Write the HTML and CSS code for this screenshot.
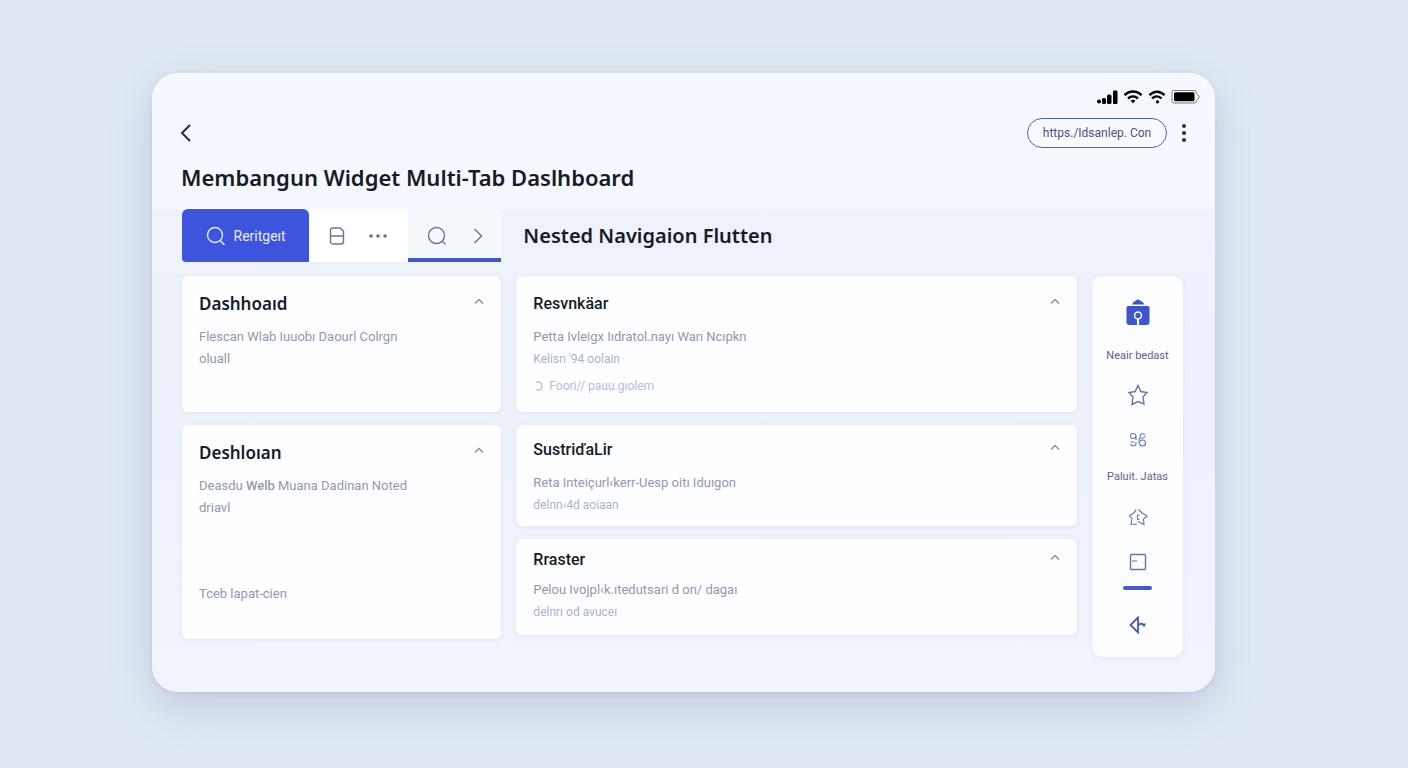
FILE: index.html
```html
<!DOCTYPE html>
<html lang="id">
<head>
    <meta charset="UTF-8">
    <meta name="viewport" content="width=device-width, initial-scale=1.0">
    <title>Membangun Widget Multi-Tab</title>
    <link rel="stylesheet" href="styles.css">
</head>
<body>

    <div class="window">
        <header class="header">
            <!-- Status icons -->
            <div class="status">
                <svg width="22" height="16" viewBox="0 0 22 16">
                    <circle cx="3" cy="12.5" r="2"/>
                    <rect x="6" y="9" width="4" height="6" rx="1.6"/>
                    <rect x="11" y="5.500" width="4.500" height="9.500" rx="1.6"/>
                    <rect x="17" y="1.500" width="4.500" height="13.500" rx="1.2"/>
                </svg>
                <svg width="20" height="16" viewBox="0 0 20 16">
                    <path class="wave" d="M1.500 6.200C6.500 1.200 13.500 1.200 18.500 6.200"/>
                    <path class="wave" d="M5 9.500C8 6.800 12 6.800 15 9.500"/>
                    <path d="M7.600 11.600Q10 9.800 12.400 11.600L10 14.500Z"/>
                </svg>
                <svg width="18" height="16" viewBox="0 0 18 16">
                    <path class="wave" d="M1.500 6.200C6 1.600 12 1.600 16.500 6.200"/>
                    <path class="wave" d="M4 9.500C7 6.500 11 6.800 13.500 9.500"/>
                    <circle cx="9.500" cy="12.800" r="1.600"/>
                </svg>
                <svg width="29" height="16" viewBox="0 0 29 16">
                    <path class="shell" d="M3 1.500H23Q25.500 1.500 25.500 4.500L28 7V9L25.500 11.500Q25.500 14 23 14H3Q1 14 1 12V3.500Q1 1.500 3 1.500Z"/>
                    <rect x="3" y="3.200" width="20.500" height="9" rx="1.5"/>
                </svg>
            </div>

            <div class="toolbar">
                <button class="icon-button" aria-label="Kembali">
                    <svg width="12" height="20" viewBox="0 0 12 20"><path class="back" d="M10 2L2 10L10 18"/></svg>
                </button>
                <div class="address">
                    <input class="url" type="text" aria-label="URL" value="https./Idsanlep. Con">
                    <button class="icon-button" aria-label="Menu">
                        <svg class="dots" width="6" height="20" viewBox="0 0 6 20">
                            <circle cx="3" cy="3" r="2"/><circle cx="3" cy="10" r="2"/><circle cx="3" cy="17" r="2"/>
                        </svg>
                    </button>
                </div>
            </div>

            <h1>Membangun Widget Multi-Tab Daslhboard</h1>
        </header>

        <main class="content">
            <nav class="tabs">
                <button class="tab tab-primary">
                    <svg class="line" width="20" height="20" viewBox="0 0 20 20"><circle cx="9" cy="9" r="7.500"/><path d="M14.200 14.500L18.500 19"/></svg>
                    Reritgeıt
                </button>
                <button class="tab tab-plain" aria-label="Halaman">
                    <svg class="line" width="16" height="20" viewBox="0 0 16 20"><path d="M4 2H11L14.500 5V15.500Q14.500 18 12 18H4Q1.500 18 1.500 15.500V4.500Q1.500 2 4 2ZM1.500 10H14.500"/></svg>
                    <svg class="more" width="20" height="6" viewBox="0 0 20 6"><circle cx="3" cy="3" r="1.800"/><circle cx="10" cy="3" r="1.800"/><circle cx="17" cy="3" r="1.800"/></svg>
                </button>
                <button class="tab tab-active" aria-label="Cari">
                    <svg class="line" width="20" height="20" viewBox="0 0 20 20"><circle cx="9.500" cy="9.500" r="8"/><path d="M15.200 15.200L18.500 18.500"/></svg>
                    <svg class="line" width="10" height="18" viewBox="0 0 10 18"><path d="M1.500 2L8.500 9L1.500 16"/></svg>
                </button>
            </nav>
            <h2>Nested Navigaion Flutten</h2>

            <!-- Left column -->
            <div class="column">
                <section class="card">
                    <div class="card-head">
                        <h3>Dashhoaıd</h3>
                        <button class="icon-button" aria-label="Tutup"><svg class="caret" width="10" height="7" viewBox="0 0 10 7"><path d="M1 5.500L5 1.500L9 5.500"/></svg></button>
                    </div>
                    <p>Flescan Wlab Iuuobı Daourl Colrgn<br>oluall</p>
                </section>
                <section class="card card-tall">
                    <div class="card-head">
                        <h3>Deshloıan</h3>
                        <button class="icon-button" aria-label="Tutup"><svg class="caret" width="10" height="7" viewBox="0 0 10 7"><path d="M1 5.500L5 1.500L9 5.500"/></svg></button>
                    </div>
                    <p>Deasdu <b>Welb</b> Muana Dadinan Noted<br>driavl</p>
                    <p class="card-foot">Tceb lapat-cien</p>
                </section>
            </div>

            <!-- Middle column -->
            <div class="column column-main">
                <section class="card">
                    <div class="card-head">
                        <h3>Resvnkäar</h3>
                        <button class="icon-button" aria-label="Tutup"><svg class="caret" width="10" height="7" viewBox="0 0 10 7"><path d="M1 5.500L5 1.500L9 5.500"/></svg></button>
                    </div>
                    <p>Petta Ivleigx Iıdratol.nayı Wan Ncıpkn<br><span class="soft">Kelisn '94 oolain</span></p>
                    <p class="note">
                        <svg width="8" height="10" viewBox="0 0 8 10"><path d="M1 1H4Q7 1 7 5T4 9H1"/></svg>
                        Foori// pauu.gıolem
                    </p>
                </section>
                <section class="card card-medium">
                    <div class="card-head">
                        <h3>SustriďaLir</h3>
                        <button class="icon-button" aria-label="Tutup"><svg class="caret" width="10" height="7" viewBox="0 0 10 7"><path d="M1 5.500L5 1.500L9 5.500"/></svg></button>
                    </div>
                    <p>Reta Inteiçurl‹kerr-Uesp oitı Iduıgon<br><span class="soft">delnn‹4d aoiaan</span></p>
                </section>
                <section class="card card-small">
                    <div class="card-head">
                        <h3>Rraster</h3>
                        <button class="icon-button" aria-label="Tutup"><svg class="caret" width="10" height="7" viewBox="0 0 10 7"><path d="M1 5.500L5 1.500L9 5.500"/></svg></button>
                    </div>
                    <p>Pelou Ivojpl‹k.ıtedutsari d on/ dagaı<br><span class="soft">delnrı od avuceı</span></p>
                </section>
            </div>

            <!-- Icon rail -->
            <aside class="rail">
                <button class="rail-button" aria-label="Kunci">
                    <svg class="solid" width="24" height="28" viewBox="0 0 24 28">
                        <path d="M6 6.500Q7 3.500 10 2.500Q12 .5 14 2.500Q17 3.500 18.500 6.500Z"/>
                        <path d="M2 8H22Q23.500 8 23.500 9.500V24Q23.500 27 20.500 27H13V21.500A4.200 4.200 0 1 0 11 21.500V27H3.500Q.5 27 .5 24V9.500Q.5 8 2 8Z"/>
                        <circle cx="12" cy="17.500" r="2.700"/>
                    </svg>
                </button>
                <span class="rail-label rail-label-first">Neair bedast</span>
                <button class="rail-button" aria-label="Favorit">
                    <svg class="line" width="20" height="22" viewBox="0 0 20 22"><path d="M10 1.500L12.800 7.500L19 8.500L15 13L16 20L10 17.500L4 20.500L5 13L1 8.500L7.200 7.500Z"/></svg>
                </button>
                <button class="rail-button" aria-label="Tautan">
                    <svg class="line thin" width="18" height="16" viewBox="0 0 18 16"><path d="M7 5Q7 1.500 4.200 1.500Q1.500 1.500 1.500 4Q1.500 6.500 4 6.500Q7 6.500 7 4V8M1.500 10H5M7 10V11.500Q7 14 4.200 14Q2 14 1.500 12M16 2.500Q12 .5 11.200 3.500Q12 6 9.500 8.500M9.500 11Q11 7.800 14 8Q16.500 8 16.500 11Q16.500 14 13.500 14Q10.500 14 10.500 11M12 6Q14 7 16.500 4"/></svg>
                </button>
                <span class="rail-label">Paluit. Jatas</span>
                <button class="rail-button" aria-label="Riwayat">
                    <svg class="line thin" width="20" height="18" viewBox="0 0 20 18"><path d="M8 1.500Q7 5 1.500 7.500L4 11L3 16.500L9 16M10.500 1.500L14 5L19 8L15.500 11L16 16.500L10 13.500M11.500 7L9.500 7.500V11.500L11.500 11"/></svg>
                </button>
                <button class="rail-button" aria-label="Tab">
                    <svg class="line" width="18" height="18" viewBox="0 0 18 18"><rect x="1.500" y="1.500" width="15" height="15" rx="1"/><path class="thin" d="M3 8H8"/></svg>
                </button>
                <span class="rail-mark"></span>
                <button class="rail-button" aria-label="Bagikan">
                    <svg class="line strong" width="18" height="18" viewBox="0 0 18 18"><path d="M9 1.500V16.500L1.500 9ZM9 9.500Q12 6.500 14 8.500L15.500 10.500M13.500 8.500L16.500 8.500"/></svg>
                </button>
            </aside>
        </main>
    </div>

</body>
</html>
```
FILE: styles.css
```css
/* Page */
* {
    box-sizing: border-box;
}

body {
    margin: 0;
    min-height: 100vh;
    padding: 73px 193px 76px 152px;
    background: #e0e9f2;
    font-family: Roboto, "Liberation Sans", sans-serif;
    color: #151c28;
}

h1, h2, h3, p {
    margin: 0;
}

button {
    border: none;
    padding: 0;
    background: none;
    font-family: inherit;
    cursor: pointer;
}

svg {
    display: block;
    flex: none;
}

/* Window */
.window {
    border-radius: 26px;
    background: linear-gradient(#eff2f9, #edf1fb 60%, #f1f4fc);
    box-shadow: 0 14px 40px rgba(120, 140, 180, 0.32), 0 1px 5px rgba(120, 140, 180, 0.16);
    overflow: hidden;
}

.header {
    padding: 15px 15px 18px 29px;
    background: #f5f8fe;
}

.status {
    display: flex;
    justify-content: flex-end;
    align-items: center;
    gap: 5px;
    height: 18px;
}

.wave {
    fill: none;
    stroke: #000;
    stroke-width: 2.4;
}

.shell {
    fill: #fff;
    stroke: #777;
}

.toolbar {
    display: flex;
    justify-content: space-between;
    align-items: center;
    height: 32px;
    margin: 11px 13px 14px 0;
}

.icon-button {
    display: block;
}

.toolbar > .icon-button {
    margin-left: -1px;
}

.back {
    fill: none;
    stroke: #17304f;
    stroke-width: 2;
}

.address {
    display: flex;
    align-items: center;
    gap: 14px;
}

.dots {
    fill: #1f2f63;
}

.url {
    width: 140px;
    height: 30px;
    padding: 0 11px;
    border: 1px solid #5065b4;
    border-radius: 15px;
    background: #f8faff;
    font-family: Roboto, sans-serif;
    font-size: 12px;
    text-align: center;
    color: #47547c;
}

h1 {
    font-family: "Noto Sans", sans-serif;
    font-size: 22px;
    line-height: 28px;
    font-weight: 600;
}

h2 {
    align-self: center;
    padding-left: 7px;
    font-family: "Noto Sans", sans-serif;
    font-size: 20px;
    line-height: 28px;
    font-weight: 600;
}

/* Content grid */
.content {
    display: grid;
    grid-template-columns: 319fr 560fr 91px;
    align-items: start;
    gap: 14px 15px;
    padding: 0 32px 35px 30px;
}

.content h2 {
    grid-column: 2 / 4;
}

.tabs {
    display: flex;
    height: 53px;
}

.tab {
    display: flex;
    align-items: center;
    justify-content: center;
    color: #69788f;
}

.tab-primary {
    flex: 127;
    gap: 8px;
    border-radius: 6px 6px 0 4px;
    background: #3d55dc;
    font-size: 14px;
    color: #e6ebff;
}

.tab-plain {
    flex: 99;
    gap: 23px;
    background: #fff;
}

.tab-active {
    flex: 93;
    gap: 26px;
    border-top: 4px solid transparent;
    border-bottom: 4px solid #3f58c4;
    background: #f5f8fc;
}

.line {
    fill: none;
    stroke: currentColor;
    stroke-width: 1.4;
}

.more {
    fill: #60718d;
}

/* Cards */
.column {
    display: flex;
    flex-direction: column;
    gap: 13px;
}

.card {
    min-height: 136px;
    padding: 18px 17px 16px;
    border-radius: 6px;
    background: #fdfeff;
    box-shadow: 0 1px 4px rgba(120, 140, 190, 0.14);
}

.card-tall {
    display: flex;
    flex-direction: column;
    min-height: 214px;
    padding-bottom: 34px;
}

.card-medium {
    min-height: 101px;
    padding-top: 15px;
    padding-bottom: 10px;
}

.card-small {
    min-height: 96px;
    padding-top: 11px;
    padding-bottom: 12px;
}

.card-head {
    display: flex;
    justify-content: space-between;
    align-items: flex-start;
    height: 20px;
    margin-bottom: 12px;
}

.card-small .card-head {
    margin-bottom: 9px;
}

.card-head .icon-button {
    padding: 4px 0;
}

h3 {
    font-family: "Noto Sans", sans-serif;
    font-size: 17px;
    line-height: 20px;
    font-weight: 600;
}

.column-main h3 {
    font-family: Roboto, sans-serif;
    font-size: 16px;
    font-weight: 500;
}

.caret {
    fill: none;
    stroke: #8b93a5;
    stroke-width: 1.5;
}

.card p {
    font-size: 13px;
    line-height: 22px;
    color: #9299ad;
}

.card b {
    font-weight: 500;
}

.card .card-foot {
    margin-top: auto;
}

.soft {
    font-size: 12px;
    color: #abb4cb;
}

.card .note {
    display: flex;
    align-items: center;
    gap: 6px;
    margin-top: 6px;
    padding-left: 2px;
    font-size: 12px;
    line-height: 20px;
    color: #b4bfd3;
}

.note svg {
    fill: none;
    stroke: #a3b0cb;
}

/* Icon rail */
.rail {
    display: flex;
    flex-direction: column;
    align-items: center;
    padding: 13px 0 10px;
    border-radius: 10px;
    background: #fcfdff;
    box-shadow: 0 1px 5px rgba(120, 140, 190, 0.14);
}

.rail-button {
    display: flex;
    align-items: center;
    justify-content: center;
    width: 45px;
    height: 45px;
    color: #6377a8;
}

.solid {
    fill: #3d56cb;
}

.strong {
    stroke: #435bb5;
    stroke-width: 1.8;
}

.thin {
    stroke-width: 1.1;
}

.rail-label {
    margin: 5px 0 7px;
    font-size: 11px;
    line-height: 20px;
    color: #62647f;
}

.rail-label-first {
    margin: 12px 0 6px;
}

.rail-mark {
    width: 29px;
    height: 4px;
    margin: 2px 0 12px;
    border-radius: 2px;
    background: #435cc4;
}
```
